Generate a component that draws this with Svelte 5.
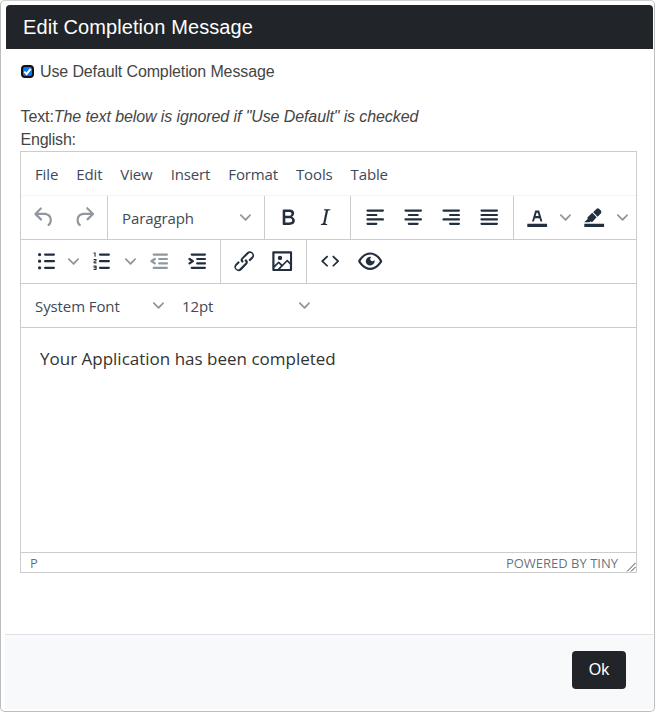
<script>
  const ic = {
    undo: "M6.4 8H12c3.7 0 6.2 2 6.8 5.1.6 2.7-.4 5.6-2.3 6.8a1 1 0 0 1-1-1.8c1.1-.6 1.8-2.7 1.4-4.6-.5-2.1-2.1-3.5-4.9-3.5H6.4l3.3 3.3a1 1 0 1 1-1.4 1.4l-5-5a1 1 0 0 1 0-1.4l5-5a1 1 0 0 1 1.4 1.4L6.4 8z",
    redo: "M17.6 10H12c-2.8 0-4.4 1.4-4.9 3.5-.4 2 .3 4 1.4 4.6a1 1 0 1 1-1 1.8c-2-1.2-2.9-4.1-2.3-6.8.6-3 3-5.1 6.8-5.1h5.6l-3.3-3.3a1 1 0 1 1 1.4-1.4l5 5a1 1 0 0 1 0 1.4l-5 5a1 1 0 0 1-1.4-1.4l3.3-3.3z",
    bold: "M7.8 19c-.3 0-.5 0-.6-.2l-.2-.5V5.7c0-.2 0-.4.2-.5l.6-.2h5c1.5 0 2.7.3 3.5 1 .7.6 1.1 1.4 1.1 2.5a3 3 0 0 1-.6 1.9c-.4.6-1 1-1.6 1.2.4.1.9.3 1.3.6s.8.7 1 1.2c.4.4.5 1 .5 1.6 0 1.3-.4 2.3-1.3 3-.8.7-2.1 1-3.8 1H7.8zm5-8.3c.6 0 1.2-.1 1.6-.5.4-.3.6-.7.6-1.3 0-1.1-.8-1.7-2.3-1.7H9.3v3.5h3.4zm.5 6c.7 0 1.3-.1 1.7-.4.4-.4.6-.9.6-1.5s-.2-1-.7-1.4c-.4-.3-1-.4-2-.4H9.4v3.8h4z",
    italic: "M16.7 4.7l-.1.9h-.3c-.6 0-1 0-1.4.3-.3.3-.4.6-.5 1.1l-2.1 9.8v.6c0 .5.4.8 1.4.8h.2l-.2.8H8l.2-.8h.2c1.1 0 1.8-.5 2-1.5l2-9.8.1-.5c0-.6-.4-.8-1.4-.8h-.3l.2-.9h5.8z",
    left: "M5 5h14c.6 0 1 .4 1 1s-.4 1-1 1H5a1 1 0 1 1 0-2zm0 4h8c.6 0 1 .4 1 1s-.4 1-1 1H5a1 1 0 1 1 0-2zm0 8h8c.6 0 1 .4 1 1s-.4 1-1 1H5a1 1 0 0 1 0-2zm0-4h14c.6 0 1 .4 1 1s-.4 1-1 1H5a1 1 0 0 1 0-2z",
    center: "M5 5h14c.6 0 1 .4 1 1s-.4 1-1 1H5a1 1 0 1 1 0-2zm3 4h8c.6 0 1 .4 1 1s-.4 1-1 1H8a1 1 0 1 1 0-2zm0 8h8c.6 0 1 .4 1 1s-.4 1-1 1H8a1 1 0 0 1 0-2zm-3-4h14c.6 0 1 .4 1 1s-.4 1-1 1H5a1 1 0 0 1 0-2z",
    right: "M5 5h14c.6 0 1 .4 1 1s-.4 1-1 1H5a1 1 0 1 1 0-2zm6 4h8c.6 0 1 .4 1 1s-.4 1-1 1h-8a1 1 0 0 1 0-2zm0 8h8c.6 0 1 .4 1 1s-.4 1-1 1h-8a1 1 0 0 1 0-2zm-6-4h14c.6 0 1 .4 1 1s-.4 1-1 1H5a1 1 0 0 1 0-2z",
    justify: "M5 5h14c.6 0 1 .4 1 1s-.4 1-1 1H5a1 1 0 1 1 0-2zm0 4h14c.6 0 1 .4 1 1s-.4 1-1 1H5a1 1 0 1 1 0-2zm0 4h14c.6 0 1 .4 1 1s-.4 1-1 1H5a1 1 0 0 1 0-2zm0 4h14c.6 0 1 .4 1 1s-.4 1-1 1H5a1 1 0 0 1 0-2z",
    textcolor: "M3 18h18v3H3zM8.7 16h-.8a.5.5 0 0 1-.5-.6l2.7-9c.1-.3.3-.4.5-.4h2.8c.2 0 .4.1.5.4l2.7 9a.5.5 0 0 1-.5.6h-.8a.5.5 0 0 1-.4-.4l-.7-2.2c0-.3-.3-.4-.5-.4h-3.4c-.2 0-.4.1-.5.4l-.7 2.2c0 .3-.2.4-.4.4zm2.6-7.6l-.6 2a.5.5 0 0 0 .5.6h1.6a.5.5 0 0 0 .5-.6l-.6-2c0-.3-.3-.4-.5-.4h-.4c-.2 0-.4.1-.5.4z",
    highlight: "M3 18h18v3H3zM7.7 16.7H3l3.3-3.3-.7-.8L10.2 8l4 4.1-4 4.2c-.2.2-.6.2-.8 0l-.6-.7-1.1 1.1zm5-7.5L11 7.4l3-2.9a2 2 0 0 1 2.6 0L18 6c.7.7.7 2 0 2.7l-2.9 2.9-1.8-1.8-.5-.6",
    ul: "M11 5h8c.6 0 1 .4 1 1s-.4 1-1 1h-8a1 1 0 0 1 0-2zm0 6h8c.6 0 1 .4 1 1s-.4 1-1 1h-8a1 1 0 0 1 0-2zm0 6h8c.6 0 1 .4 1 1s-.4 1-1 1h-8a1 1 0 0 1 0-2zM4.5 6a1.5 1.5 0 1 1 3 0 1.5 1.5 0 0 1-3 0zm0 6a1.5 1.5 0 1 1 3 0 1.5 1.5 0 0 1-3 0zm0 6a1.5 1.5 0 1 1 3 0 1.5 1.5 0 0 1-3 0z",
    ol: "M10 17h8c.6 0 1 .4 1 1s-.4 1-1 1h-8a1 1 0 0 1 0-2zm0-6h8c.6 0 1 .4 1 1s-.4 1-1 1h-8a1 1 0 0 1 0-2zm0-6h8c.6 0 1 .4 1 1s0 1-1 1h-8a1 1 0 1 1 0-2zM6 4v3.5c0 .3-.2.5-.5.5a.5.5 0 0 1-.5-.5V5h-.5a.5.5 0 0 1 0-1H6zm-1 8.8l.2.2h1.3c.3 0 .5.2.5.5s-.2.5-.5.5H4.9a1 1 0 0 1-.9-1V13c0-.4.3-.8.6-1l1.2-.4.2-.3a.2.2 0 0 0-.2-.2H4.5a.5.5 0 0 1-.5-.5c0-.3.2-.5.5-.5h1.6c.5 0 .9.4.9 1v.1c0 .4-.3.8-.6 1l-1.2.4-.2.3zM7 17v2c0 .6-.4 1-1 1H4.5a.5.5 0 0 1 0-1h1.2c.2 0 .3-.1.3-.3 0-.2-.1-.3-.3-.3H4.4a.4.4 0 1 1 0-.8h1.3c.2 0 .3-.1.3-.3 0-.2-.1-.3-.3-.3H4.5a.5.5 0 1 1 0-1H6c.6 0 1 .4 1 1z",
    outdent: "M7 5h12c.6 0 1 .4 1 1s-.4 1-1 1H7a1 1 0 1 1 0-2zm5 4h7c.6 0 1 .4 1 1s-.4 1-1 1h-7a1 1 0 0 1 0-2zm0 4h7c.6 0 1 .4 1 1s-.4 1-1 1h-7a1 1 0 0 1 0-2zm-5 4h12a1 1 0 0 1 0 2H7a1 1 0 0 1 0-2zm1.6-3.8a1 1 0 0 1-1.2 1.6l-3-2a1 1 0 0 1 0-1.6l3-2a1 1 0 0 1 1.2 1.6L6.8 12l1.8 1.2z",
    indent: "M7 5h12c.6 0 1 .4 1 1s-.4 1-1 1H7a1 1 0 1 1 0-2zm5 4h7c.6 0 1 .4 1 1s-.4 1-1 1h-7a1 1 0 0 1 0-2zm0 4h7c.6 0 1 .4 1 1s-.4 1-1 1h-7a1 1 0 0 1 0-2zm-5 4h12a1 1 0 0 1 0 2H7a1 1 0 0 1 0-2zm-2.6-3.8L6.2 12l-1.8-1.2a1 1 0 0 1 1.2-1.6l3 2a1 1 0 0 1 0 1.6l-3 2a1 1 0 1 1-1.2-1.6z",
    link: "M6.2 12.3a1 1 0 0 1 1.4 1.4l-2 2a2 2 0 1 0 2.6 2.8l4.8-4.8a1 1 0 0 0 0-1.4 1 1 0 1 1 1.4-1.3 2.9 2.9 0 0 1 0 4L9.6 20a3.9 3.9 0 0 1-5.5-5.5l2-2zm11.6-.6a1 1 0 0 1-1.4-1.4l2-2a2 2 0 1 0-2.6-2.8L11 10a1 1 0 0 0 0 1.4A1 1 0 1 1 9.6 13a2.9 2.9 0 0 1 0-4L14.4 4a3.9 3.9 0 0 1 5.5 5.5l-2 2z",
    image: "M5 15.7l3.3-3.2c.3-.3.7-.3 1 0L12 15l4.1-4c.3-.4.8-.4 1 0l2 1.9V5H5v10.7zM5 18V19h3l2.8-2.9-2-2L5 17.9zm14-3l-2.5-2.4-6.4 6.5H19v-4zM4 3h16c.6 0 1 .4 1 1v16c0 .6-.4 1-1 1H4a1 1 0 0 1-1-1V4c0-.6.4-1 1-1zm6 8a2 2 0 1 0 0-4 2 2 0 0 0 0 4z",
    code: "M9.8 15.7c.3.3.3.8 0 1-.3.4-.9.4-1.2 0l-4.4-4.1a.8.8 0 0 1 0-1.2l4.4-4.2c.3-.3.9-.3 1.2 0 .3.3.3.8 0 1.1L6 12l3.8 3.7zM14.2 15.7c-.3.3-.3.8 0 1 .3.4.9.4 1.2 0l4.4-4.1c.3-.3.3-.9 0-1.2l-4.4-4.2a.8.8 0 0 0-1.2 0c-.3.3-.3.8 0 1.1L18 12l-3.8 3.7z",
    preview: "M3.5 12.5c.5.8 1.1 1.6 1.8 2.3 2 2 4.2 3.2 6.7 3.2s4.7-1.2 6.7-3.2a16.2 16.2 0 0 0 2.1-2.8 15.7 15.7 0 0 0-2.1-2.8c-2-2-4.2-3.2-6.7-3.2a9.3 9.3 0 0 0-6.7 3.2A16.2 16.2 0 0 0 3.2 12c0 .2.2.3.3.5zm-2.4-1l.7-1.2L4 7.8C6.2 5.4 8.9 4 12 4c3 0 5.8 1.4 8.1 3.8a18.2 18.2 0 0 1 2.8 3.7v1l-.7 1.2-2.1 2.5c-2.3 2.4-5 3.8-8.1 3.8-3 0-5.8-1.4-8.1-3.8a18.2 18.2 0 0 1-2.8-3.7 1 1 0 0 1 0-1zm12-3.3a2 2 0 1 0 2.7 2.6 4 4 0 1 1-2.6-2.6z"
  };
  const chev = "M8.7 2.2c.3-.3.8-.3 1 0 .4.4.4.9 0 1.2L5.7 7.8c-.3.3-.9.3-1.2 0L.2 3.4a.8.8 0 0 1 0-1.2c.3-.3.8-.3 1.1 0L5 6l3.7-3.8z";
  const menu = ["File", "Edit", "View", "Insert", "Format", "Tools", "Table"];
</script>

{#snippet icon(name, dim = false)}
  <span class="btn" class:dim><svg class="ico" viewBox="0 0 24 24"><path d={ic[name]} /></svg></span>
{/snippet}
{#snippet chevron()}
  <svg class="chev" viewBox="0 0 10 10"><path d={chev} /></svg>
{/snippet}
{#snippet split(name)}
  <span class="split"><svg class="ico" viewBox="0 0 24 24"><path d={ic[name]} /></svg>{@render chevron()}</span>
{/snippet}

<div class="modal">
  <header class="head"><h5>Edit Completion Message</h5></header>
  <main class="body">
    <label class="check">
      <span class="cb">
        <input type="checkbox" checked />
        <svg class="tick" width="9" height="9" viewBox="0 0 9 9"><path d="M1.3 4.6 3.6 6.9 7.7 1.9" /></svg>
      </span>
      <span>Use Default Completion Message</span>
    </label>
    <div class="note">Text:<em>The text below is ignored if "Use Default" is checked</em></div>
    <div class="lang">English:</div>
    <div class="editor">
      <nav class="menubar">
        {#each menu as m}<span class="mi">{m}</span>{/each}
      </nav>
      <div class="row">
        <div class="grp hist">{@render icon("undo", true)}{@render icon("redo", true)}</div>
        <div class="grp para"><span class="select w-para"><span>Paragraph</span>{@render chevron()}</span></div>
        <div class="grp fmt">{@render icon("bold")}{@render icon("italic")}</div>
        <div class="grp aligns">{@render icon("left")}{@render icon("center")}{@render icon("right")}{@render icon("justify")}</div>
        <div class="grp colors">{@render split("textcolor")}{@render split("highlight")}</div>
      </div>
      <div class="row">
        <div class="grp lists">{@render split("ul")}{@render split("ol")}{@render icon("outdent", true)}{@render icon("indent")}</div>
        <div class="grp media">{@render icon("link")}{@render icon("image")}</div>
        <div class="grp tools">{@render icon("code")}{@render icon("preview")}</div>
      </div>
      <div class="row fonts">
        <span class="select w-font"><span>System Font</span>{@render chevron()}</span>
        <span class="select w-size"><span>12pt</span>{@render chevron()}</span>
      </div>
      <div class="content"><p>Your Application has been completed</p></div>
      <footer class="status">
        <span>P</span>
        <span class="tiny">POWERED BY TINY</span>
        <svg class="grip" width="10" height="10" viewBox="0 0 10 10"><path d="M9.5 1 1 9.5M9.5 5 5 9.5" /></svg>
      </footer>
    </div>
  </main>
  <footer class="foot"><button type="button">Ok</button></footer>
</div>

<style>
  :global(body) { margin: 0; background: #fff; }
  .modal {
    box-sizing: border-box;
    width: 655px;
    height: 712px;
    border: 1px solid #bdbdbd;
    border-top-color: #d0d0d0;
    border-radius: 5px;
    padding: 4px 1px 2px 4px;
    display: flex;
    flex-direction: column;
    font-family: "Liberation Sans", Arial, sans-serif;
    font-size: 16px;
    line-height: 24px;
    color: #454545;
    background: #fff;
  }
  .head {
    margin-left: 1px;
    height: 44px;
    background: #212529;
    color: #fff;
    border-radius: 4px 4px 0 0;
    padding: 0 17px;
    display: flex;
    align-items: center;
    flex: none;
  }
  h5 { margin: 0; font-size: 20px; font-weight: 400; line-height: 44px; letter-spacing: 0.09px; }
  .body { flex: 1; padding: 11px 16px 0 15px; min-height: 0; }
  .check { display: flex; align-items: center; height: 24px; letter-spacing: -0.13px; }
  .cb { position: relative; width: 13px; height: 13px; margin: -1px 6px 0 1px; flex: none; }
  .cb input {
    appearance: none;
    box-sizing: border-box;
    display: block;
    width: 13px; height: 13px; margin: 0;
    background: #0a78f0;
    border: 2px solid #111;
    border-radius: 4px;
  }
  .tick { position: absolute; left: 2px; top: 2px; fill: none; stroke: #fff; stroke-width: 2; }
  .note { margin-top: 21px; padding-left: 0.5px; letter-spacing: -0.1px; }
  .lang { height: 22px; line-height: 22px; padding-left: 0.5px; letter-spacing: -0.2px; }
  .editor {
    box-sizing: border-box;
    width: 617px;
    height: 422px;
    border: 1px solid #ccc;
    display: flex;
    flex-direction: column;
    font-family: "Open Sans", sans-serif;
    font-size: 15px;
    color: #222f3e;
  }
  .menubar { height: 44px; flex: none; display: flex; align-items: center; padding-left: 5px; border-bottom: 1px solid #f4f4f4; box-sizing: border-box; }
  .mi { padding: 0 9px; letter-spacing: -0.13px; color: #3d4a59; }
  .row { flex: none; height: 44px; display: flex; align-items: stretch; border-bottom: 1px solid #ccc; box-sizing: border-box; }
  .grp { display: flex; align-items: center; border-right: 1px solid #ccc; box-sizing: border-box; }
  .hist { width: 87px; padding-left: 3px; }
  .hist .btn { width: 40px; }
  .para { width: 157px; padding-left: 14px; }
  .fmt { width: 86px; padding-left: 5px; }
  .fmt .btn { width: 37px; }
  .aligns { width: 163px; padding-left: 5px; }
  .aligns .btn { width: 38px; }
  .colors { border-right: 0; padding-left: 9.8px; gap: 9.8px; }
  .colors .split { gap: 10px; }
  .lists { width: 200px; padding-left: 11.8px; }
  .lists .split:nth-child(1) { margin-right: 9.5px; }
  .lists .split:nth-child(2) { margin-right: 4.5px; }
  .lists .btn { width: 37.7px; }
  .media { width: 86px; padding-left: 4px; }
  .media .btn { width: 38px; }
  .tools { border-right: 0; padding-left: 3px; }
  .tools .btn { width: 40px; }
  .btn { height: 34px; display: flex; align-items: center; justify-content: center; flex: none; }
  .ico { width: 26.4px; height: 26.4px; fill: #222f3e; display: block; flex: none; }
  .btn.dim .ico { fill: rgba(34, 47, 62, 0.5); }
  .split { display: flex; align-items: center; height: 34px; gap: 9.3px; flex: none; }
  .chev { width: 11px; height: 11px; fill: rgba(34, 47, 62, 0.5); flex: none; }
  .select { display: flex; align-items: center; justify-content: space-between; letter-spacing: -0.1px; color: #3d4a59; box-sizing: border-box; }
  .w-para { width: 128.5px; }
  .fonts { align-items: center; padding-left: 14px; }
  .w-font { width: 129px; }
  .w-size { width: 128px; margin-left: 18px; }
  .content { flex: 1; padding: 0 19px; font-size: 17px; color: #333; }
  .content p { margin: 19px 0 0; line-height: 24px; }
  .status {
    position: relative;
    flex: none;
    height: 20px;
    box-sizing: border-box;
    border-top: 1px solid #ccc;
    display: flex;
    align-items: center;
    justify-content: space-between;
    padding: 0 18px 0 9px;
    font-size: 13px;
    color: rgba(34, 47, 62, 0.7);
  }
  .grip { position: absolute; right: 0; bottom: 0; fill: none; stroke: #444; stroke-width: 1; }
  .foot {
    flex: none;
    height: 75px;
    box-sizing: border-box;
    border-top: 1px solid #dee2e6;
    background: #f8f9fa;
    display: flex;
    align-items: center;
    justify-content: flex-end;
    padding: 0 27px 4px 0;
  }
  button {
    width: 54px; height: 38px;
    background: #212529;
    color: #fff;
    border: 0;
    border-radius: 4px;
    font: 16px/24px "Liberation Sans", Arial, sans-serif;
    padding: 0;
  }
</style>
